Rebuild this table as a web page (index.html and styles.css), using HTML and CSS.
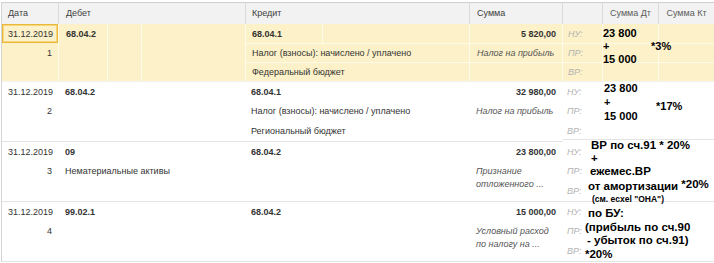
FILE: index.html
```html
<!DOCTYPE html>
<html lang="ru">
<head>
<meta charset="utf-8">
<title>Проводки</title>
<link rel="stylesheet" href="styles.css">
</head>
<body>
<div class="table">
  <div class="head">
    <div class="hc">Дата</div>
    <div class="hc">Дебет</div>
    <div class="hc">Кредит</div>
    <div class="hc">Сумма</div>
    <div class="hc"></div>
    <div class="hc center">Сумма Дт</div>
    <div class="hc center">Сумма Кт</div>
  </div>

  <div class="row sel">
    <div class="cell date c1 r1">31.12.2019</div>
    <div class="cell num c1 r2">1</div>
    <div class="dt c2 rall vl">
      <div class="acc b">68.04.2</div>
      <div class="sub s2 vl"></div>
      <div class="sub s3 vl"></div>
    </div>
    <div class="kt1 c3 r1 vl">
      <div class="kacc b">68.04.1</div>
      <div class="ksub vl"></div>
    </div>
    <div class="cell kt c3 r2 vl hl">Налог (взносы): начислено / уплачено</div>
    <div class="cell kt c3 r3 vl hl">Федеральный бюджет</div>
    <div class="cell amt c4 r1 vl">5 820,00</div>
    <div class="cell note c4 r2 vl hl">Налог на прибыль</div>
    <div class="cell c4 r3 vl hl"></div>
    <div class="cell lbl c5 r1 vl">НУ:</div>
    <div class="cell lbl c5 r2 vl hl">ПР:</div>
    <div class="cell lbl c5 r3 vl hl">ВР:</div>
    <div class="cell c6 r1 vl"></div>
    <div class="cell c6 r2 vl hl"></div>
    <div class="cell c6 r3 vl hl"></div>
    <div class="cell c7 r1 vl"></div>
    <div class="cell c7 r2 vl hl"></div>
    <div class="cell c7 r3 vl hl"></div>
    <div class="ann a1"><div>23 800</div><div>+</div><div>15 000</div></div>
    <div class="ann a1p">*3%</div>
  </div>

  <div class="row">
    <div class="cell date c1 r1">31.12.2019</div>
    <div class="cell num c1 r2">2</div>
    <div class="dt c2 rall">
      <div class="acc b">68.04.2</div>
    </div>
    <div class="cell kt c3 r1 b">68.04.1</div>
    <div class="cell kt c3 r2">Налог (взносы): начислено / уплачено</div>
    <div class="cell kt c3 r3">Региональный бюджет</div>
    <div class="cell amt c4 r1">32 980,00</div>
    <div class="cell note c4 r2">Налог на прибыль</div>
    <div class="cell lbl c5 r1">НУ:</div>
    <div class="cell lbl c5 r2">ПР:</div>
    <div class="cell lbl c5 r3">ВР:</div>
    <div class="ann a2"><div>23 800</div><div>+</div><div>15 000</div></div>
    <div class="ann a2p">*17%</div>
    <div class="patch"></div>
  </div>

  <div class="row">
    <div class="cell date c1 r1">31.12.2019</div>
    <div class="cell num c1 r2">3</div>
    <div class="dt c2 rall">
      <div class="acc b">09</div>
      <div class="accname">Нематериальные активы</div>
    </div>
    <div class="cell kt c3 r1 b">68.04.2</div>
    <div class="cell amt c4 r1">23 800,00</div>
    <div class="cell note2 c4 r23">Признание<br>отложенного ...</div>
    <div class="cell lbl c5 r1">НУ:</div>
    <div class="cell lbl c5 r2">ПР:</div>
    <div class="cell lbl c5 r3">ВР:</div>
    <div class="ann big a3">
      <div class="p3">ВР по сч.91 * 20%</div>
      <div class="p3">+</div>
      <div class="p2">ежемес.ВР</div>
      <div>от амортизации <span class="sup">*20%</span></div>
      <div class="small">(см. ecxel "ОНА")</div>
    </div>
  </div>

  <div class="row">
    <div class="cell date c1 r1">31.12.2019</div>
    <div class="cell num c1 r2">4</div>
    <div class="dt c2 rall">
      <div class="acc b">99.02.1</div>
    </div>
    <div class="cell kt c3 r1 b">68.04.2</div>
    <div class="cell amt c4 r1">15 000,00</div>
    <div class="cell note2 c4 r23">Условный расход<br>по налогу на ...</div>
    <div class="cell lbl c5 r1">НУ:</div>
    <div class="cell lbl c5 r2">ПР:</div>
    <div class="cell lbl c5 r3">ВР:</div>
    <div class="ann big a4">
      <div class="p3">по БУ:</div>
      <div>(прибыль по сч.90</div>
      <div class="p2">- убыток по сч.91)</div>
      <div>*20%</div>
    </div>
  </div>
</div>
</body>
</html>
```

FILE: styles.css
```css
* { box-sizing: border-box; }

body {
  margin: 0;
  background: #ffffff;
  font-family: "Liberation Sans", Arial, sans-serif;
  font-size: 9px;
  color: #333333;
  overflow: hidden;
}

.table {
  margin: 2px 0 0 1px;
  width: 713px;
  border-top: 1px solid #cfcfcf;
  border-left: 1px solid #d4d4d4;
}

.head,
.row {
  display: grid;
  grid-template-columns: 56px 187px 224px 93px 40px 56px 56px;
}

.head {
  height: 21px;
  background: #f2f2f2;
}

.hc {
  line-height: 21px;
  padding-left: 6px;
  color: #404040;
  border-left: 1px solid #dadada;
  white-space: nowrap;
}

.hc:first-child {
  border-left: 0;
}

.hc:nth-child(2),
.hc:nth-child(4) {
  padding-left: 7px;
}

.hc.center {
  padding-left: 0;
  text-align: center;
  color: #5c5c5c;
}

.row {
  position: relative;
  height: 60px;
  grid-template-rows: repeat(3, 1fr);
  border-bottom: 1px solid #e4e4e4;
}

.row.sel {
  height: 58px;
  background: #fcf1c8;
  border-bottom-color: #f2f2f2;
}

.c1 { grid-column: 1; }
.c2 { grid-column: 2; }
.c3 { grid-column: 3; }
.c4 { grid-column: 4; }
.c5 { grid-column: 5; }
.c6 { grid-column: 6; }
.c7 { grid-column: 7; }
.r1 { grid-row: 1; }
.r2 { grid-row: 2; }
.r3 { grid-row: 3; }
.r23 { grid-row: 2 / 4; }
.rall { grid-row: 1 / 4; }

.cell {
  display: flex;
  align-items: center;
  padding: 0 6px;
  white-space: nowrap;
  min-width: 0;
}

.b { font-weight: bold; }

.sel .vl { border-left: 1px solid #fffbea; }
.sel .hl { border-top: 1px solid #fffbea; }

.date { padding-left: 6px; }

.sel .date {
  border: 1px solid #ebb93a;
  box-shadow: inset 0 0 0 1px #f6d77e;
  padding-left: 5px;
}

.num {
  justify-content: flex-end;
  padding-right: 6px;
}

.dt {
  display: grid;
  grid-template-columns: 48px 34px 1fr;
  grid-template-rows: repeat(3, 1fr);
  min-width: 0;
}

.acc {
  grid-column: 1;
  grid-row: 1;
  display: flex;
  align-items: center;
  padding-left: 7px;
  white-space: nowrap;
}

.accname {
  grid-column: 1 / 4;
  grid-row: 2;
  display: flex;
  align-items: center;
  padding-left: 7px;
  white-space: nowrap;
}

.sub { grid-row: 1 / 4; }
.s2 { grid-column: 2; }
.s3 { grid-column: 3; }

.kt1 {
  display: flex;
  min-width: 0;
}

.kacc {
  width: 76px;
  display: flex;
  align-items: center;
  padding-left: 6px;
}

.ksub { flex: 1; }

.kt { padding-left: 6px; }

.amt {
  justify-content: flex-end;
  padding-right: 6px;
  font-weight: bold;
}

.note {
  font-style: italic;
  color: #555555;
  padding-left: 7px;
}

.note2 {
  align-items: flex-start;
  padding: 3px 0 0 7px;
  font-style: italic;
  color: #555555;
  line-height: 13px;
}

.lbl {
  font-style: italic;
  color: #b3b3b3;
  padding-left: 5px;
}

.ann {
  position: absolute;
  z-index: 2;
  font-weight: bold;
  color: #000000;
  font-size: 11px;
  line-height: 13px;
  white-space: nowrap;
}

.ann.big { font-size: 11.5px; }

.a1 { left: 601px; top: 3px; }
.a1p { left: 649px; top: 16px; }

.a2 { left: 602px; top: -1px; line-height: 14px; }
.a2p { left: 654px; top: 17px; line-height: 14px; }

.a3 { left: 586px; top: -3px; }
.a4 { left: 583px; top: 5px; line-height: 13.5px; }

.p2 { padding-left: 2px; }
.p3 { padding-left: 3px; }

.sup { vertical-align: 2px; }

.small {
  font-size: 8.5px;
  padding-left: 4px;
}

.patch {
  position: absolute;
  z-index: 1;
  left: 561px;
  right: 0;
  top: 57px;
  height: 5px;
  background: #ffffff;
  border-top: 1px solid #e4e4e4;
}
```
